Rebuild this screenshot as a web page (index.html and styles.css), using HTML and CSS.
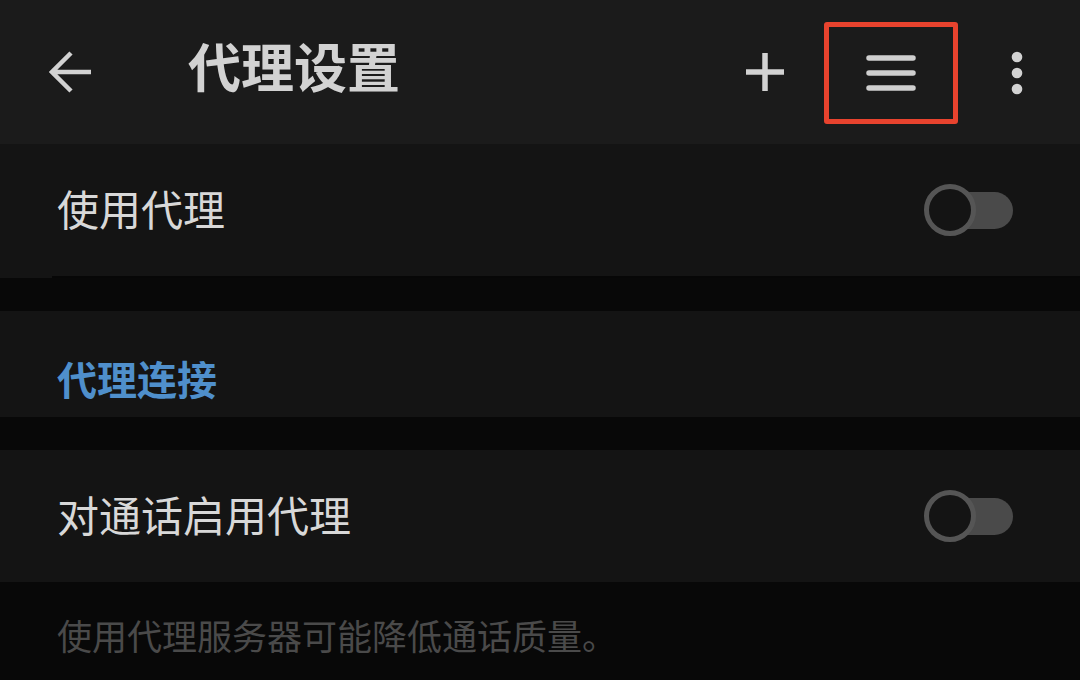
FILE: index.html
```html
<!DOCTYPE html>
<html lang="zh-CN">
<head>
<meta charset="UTF-8" />
<meta name="viewport" content="width=device-width, initial-scale=1" />
<title>代理设置</title>
<link rel="stylesheet" href="styles.css">
</head>
<body>

<header class="topbar">
  <button class="icon-btn back" aria-label="返回">
    <svg width="44" height="44" viewBox="0 0 44 44"><path d="M42 22H5M22 3L3 22l19 19" fill="none" stroke="#d2d2d2" stroke-width="4.5"/></svg>
  </button>
  <h1 class="title">代理设置</h1>
  <div class="actions">
    <button class="icon-btn add" aria-label="添加">
      <svg width="38" height="38" viewBox="0 0 38 38"><path d="M19 0v38M0 19h38" stroke="#d2d2d2" stroke-width="5.5"/></svg>
    </button>
    <button class="icon-btn menu highlight" aria-label="列表">
      <svg width="50" height="36" viewBox="0 0 50 36"><path d="M3 3h44M3 18h44M3 33h44" stroke="#cfcfcf" stroke-width="5.5" stroke-linecap="round"/></svg>
    </button>
    <button class="icon-btn more" aria-label="更多">
      <svg width="12" height="44" viewBox="0 0 12 44"><circle cx="6" cy="6" r="5.3" fill="#d2d2d2"/><circle cx="6" cy="22" r="5.3" fill="#d2d2d2"/><circle cx="6" cy="38" r="5.3" fill="#d2d2d2"/></svg>
    </button>
  </div>
</header>

<main>
  <div class="row row-divided">
    <span class="row-label">使用代理</span>
    <span class="switch"></span>
  </div>

  <div class="gap"></div>

  <div class="section-head">代理连接</div>

  <div class="gap"></div>

  <div class="row">
    <span class="row-label">对通话启用代理</span>
    <span class="switch"></span>
  </div>

  <p class="hint">使用代理服务器可能降低通话质量。</p>
</main>

</body>
</html>
```

FILE: styles.css
```css
/* Reset */
*, *::before, *::after {
  margin: 0; padding: 0; box-sizing: border-box;
}
html, body {
  height: 100%;
  font-family: "Noto Sans CJK SC", "Noto Sans", sans-serif;
  background-color: #080808;
  color: #d6d6d6;
  overflow: hidden;
}

button {
  background: none;
  border: none;
  cursor: pointer;
}

.topbar {
  height: 144px;
  background: #1b1b1b;
  display: flex;
  align-items: center;
}
.icon-btn {
  display: flex;
  align-items: center;
  justify-content: center;
}
.back {
  margin-left: 49px;
}
.title {
  margin-left: 95px;
  margin-bottom: 14px;
  font-size: 53px;
  font-weight: 700;
  color: #d2d2d2;
  line-height: 1;
}
.actions {
  margin-left: auto;
  display: flex;
  align-items: center;
}
.add {
  margin-right: 40px;
}
.menu {
  width: 134px;
  height: 102px;
  margin-top: 2px;
}
.highlight {
  border: 5.5px solid #e8432e;
  border-radius: 3px;
}
.more {
  margin-left: 53px;
  margin-right: 57px;
  margin-top: 2px;
}

.row {
  height: 132px;
  background: #141414;
  display: flex;
  align-items: center;
  padding: 0 66px 0 57px;
  position: relative;
}
.row-divided {
  height: 134px;
  border-bottom: 2px solid #070707;
  background-clip: padding-box;
}
.row-divided::before {
  content: "";
  position: absolute;
  left: 0;
  bottom: -2px;
  width: 52px;
  height: 2px;
  background: #141414;
}
.row-label {
  font-size: 42px;
  color: #d8d8d8;
  line-height: 1;
  margin-top: -4px;
}

.switch {
  margin-left: auto;
  width: 90px;
  height: 52px;
  position: relative;
}
.switch::before {
  content: "";
  position: absolute;
  left: 24px;
  right: 1px;
  top: 8px;
  height: 37px;
  border-radius: 19px;
  background: #4a4a4a;
}
.switch::after {
  content: "";
  position: absolute;
  left: 0;
  top: 0;
  width: 52px;
  height: 52px;
  border-radius: 50%;
  border: 5px solid #555555;
  background: #141414;
}

.gap {
  height: 33px;
}

.section-head {
  height: 106px;
  background: #141414;
  padding: 28px 57px 0;
  display: flex;
  align-items: center;
  font-size: 40px;
  font-weight: 700;
  color: #4f8fcb;
  line-height: 1;
}

.hint {
  padding: 35px 57px 0;
  font-size: 35px;
  color: #4a4a4a;
  line-height: 1;
}
```
